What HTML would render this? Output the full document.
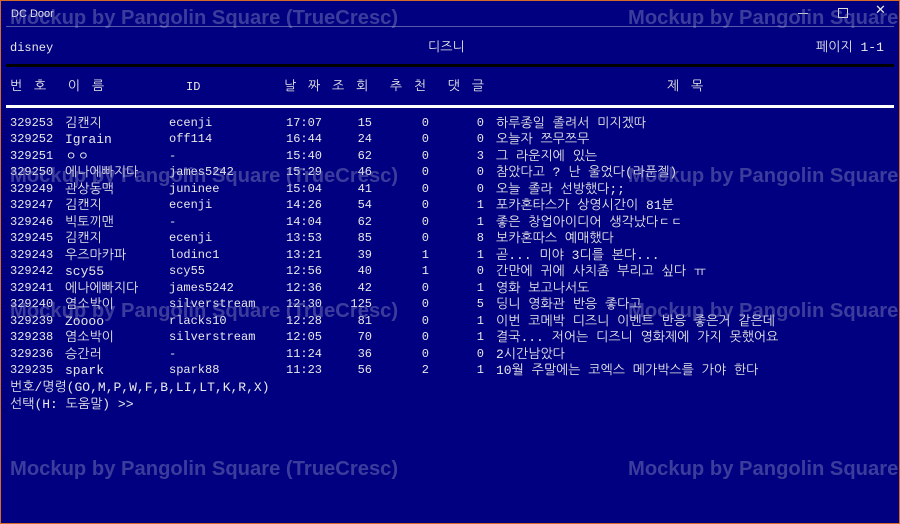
<!DOCTYPE html>
<html><head><meta charset="utf-8"><style>
html,body{margin:0;padding:0;}
body{width:900px;height:524px;background:#000080;position:relative;overflow:hidden;border:0;}
.frame{position:absolute;left:0;top:0;width:898px;height:522px;border:1px solid #d86a28;}
.t{position:absolute;color:#e8e8e8;font-family:"Liberation Mono","Noto Sans CJK KR",monospace;font-size:12px;white-space:pre;line-height:14px;}
.k{font-family:"Liberation Mono","NanumGothic","Noto Sans CJK KR",monospace;font-size:13px;}
.r{text-align:right;}
.wm{position:absolute;font-family:"Liberation Sans","DejaVu Sans",sans-serif;font-weight:bold;font-size:20.2px;color:rgba(150,150,200,0.4);white-space:nowrap;}
</style></head><body>
<div class="frame"></div>
<div class="t" style="left:11px;top:7px;font-family:'Liberation Sans',sans-serif;font-size:11px;color:#eee">DC Door</div>
<div style="position:absolute;left:6px;top:26px;width:888px;height:1px;background:#5a5aa8"></div>
<div style="position:absolute;left:798px;top:13px;width:10px;height:1px;background:#ccc"></div>
<div style="position:absolute;left:838px;top:8px;width:8px;height:8px;border:1px solid #ddd"></div>
<div class="t" style="left:875px;top:4px;font-family:'DejaVu Sans';font-size:13px">✕</div>

<div class="t" style="left:10px;top:41px">disney</div>
<div class="t k" style="left:428px;top:41px">디즈니</div>
<div class="t k" style="left:816px;top:41px">페이지 1-1</div>
<div style="position:absolute;left:6px;top:64px;width:888px;height:3px;background:#000"></div>
<div class="t k" style="left:10px;top:80px;letter-spacing:2px">번 호  이 름</div>
<div class="t" style="left:186px;top:80px">ID</div>
<div class="t k" style="left:284px;top:80px;letter-spacing:2px">날 짜 조 회  추 천  댓 글</div>
<div class="t k" style="left:667px;top:80px;letter-spacing:2px">제 목</div>
<div style="position:absolute;left:6px;top:105px;width:888px;height:3px;background:#fff"></div>

<div id="rows"></div>
<div class="t k" style="left:10px;top:381px">번호/명령(GO,M,P,W,F,B,LI,LT,K,R,X)</div>
<div class="t k" style="left:10px;top:398px">선택(H: 도움말) &gt;&gt;</div>

<div class="wm" style="left:10px;top:7px">Mockup by Pangolin Square (TrueCresc)</div>
<div class="wm" style="left:628px;top:7px">Mockup by Pangolin Square (TrueCresc)</div>
<div class="wm" style="left:10px;top:165px">Mockup by Pangolin Square (TrueCresc)</div>
<div class="wm" style="left:628px;top:165px">Mockup by Pangolin Square (TrueCresc)</div>
<div class="wm" style="left:10px;top:300px">Mockup by Pangolin Square (TrueCresc)</div>
<div class="wm" style="left:628px;top:300px">Mockup by Pangolin Square (TrueCresc)</div>
<div class="wm" style="left:10px;top:458px">Mockup by Pangolin Square (TrueCresc)</div>
<div class="wm" style="left:628px;top:458px">Mockup by Pangolin Square (TrueCresc)</div>

<script>
var d=[
["329253","김캔지","ecenji","17:07","15","0","0","하루종일 졸려서 미지겠따"],
["329252","Igrain","off114","16:44","24","0","0","오늘자 쯔무쯔무"],
["329251","ㅇㅇ","-","15:40","62","0","3","그 라운지에 있는"],
["329250","에나에빠지다","james5242","15:29","46","0","0","참았다고 ? 난 울었다(라푼젤)"],
["329249","관상동맥","juninee","15:04","41","0","0","오늘 졸라 선방했다;;"],
["329247","김캔지","ecenji","14:26","54","0","1","포카혼타스가 상영시간이 81분"],
["329246","빅토끼맨","-","14:04","62","0","1","좋은 창업아이디어 생각났다ㄷㄷ"],
["329245","김캔지","ecenji","13:53","85","0","8","보카혼따스 예매했다"],
["329243","우즈마카파","lodinc1","13:21","39","1","1","곧... 미야 3디를 본다..."],
["329242","scy55","scy55","12:56","40","1","0","간만에 귀에 사치좀 부리고 싶다 ㅠ"],
["329241","에나에빠지다","james5242","12:36","42","0","1","영화 보고나서도"],
["329240","염소박이","silverstream","12:30","125","0","5","딩니 영화관 반응 좋다고"],
["329239","Zoooo","rlacks10","12:28","81","0","1","이번 코메박 디즈니 이벤트 반응 좋은거 같은데"],
["329238","염소박이","silverstream","12:05","70","0","1","결국... 저어는 디즈니 영화제에 가지 못했어요"],
["329236","승간러","-","11:24","36","0","0","2시간남았다"],
["329235","spark","spark88","11:23","56","2","1","10월 주말에는 코엑스 메가박스를 가야 한다"]];
var h="";
d.forEach(function(r,i){var y=116+i*16.47;
h+='<div class="t" style="left:10px;top:'+y+'px">'+r[0]+'</div>';
h+='<div class="t k" style="left:65px;top:'+(y+1)+'px">'+r[1]+'</div>';
h+='<div class="t" style="left:169px;top:'+y+'px">'+r[2]+'</div>';
h+='<div class="t" style="left:286px;top:'+y+'px">'+r[3]+'</div>';
h+='<div class="t r" style="left:330px;width:42px;top:'+y+'px">'+r[4]+'</div>';
h+='<div class="t r" style="left:400px;width:29px;top:'+y+'px">'+r[5]+'</div>';
h+='<div class="t r" style="left:455px;width:29px;top:'+y+'px">'+r[6]+'</div>';
h+='<div class="t k" style="left:496px;top:'+(y+1)+'px">'+r[7]+'</div>';});
document.getElementById("rows").innerHTML=h;
</script>
</body></html>
